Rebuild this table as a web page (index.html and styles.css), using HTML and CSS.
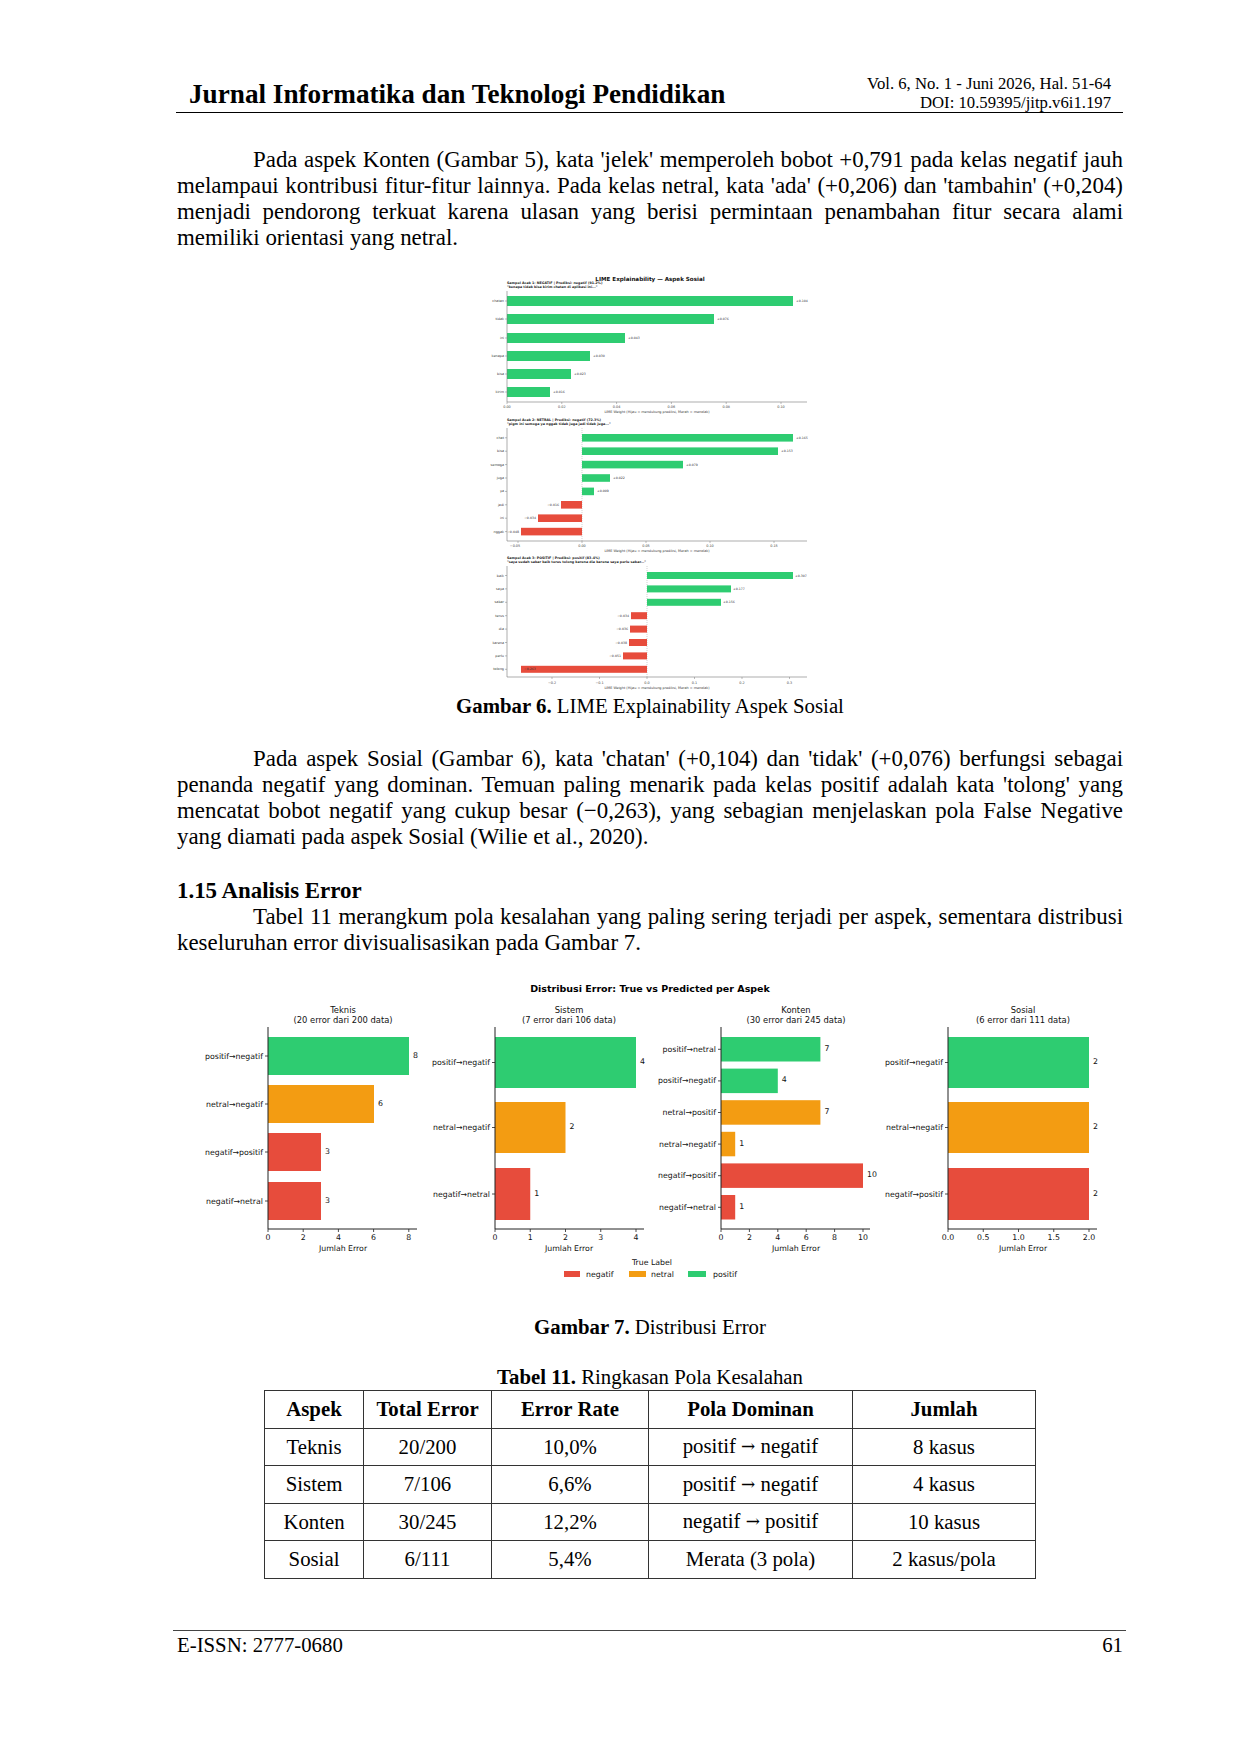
FILE: index.html
```html
<!DOCTYPE html>
<html lang="id">
<head>
<meta charset="utf-8">
<title>Jurnal Informatika dan Teknologi Pendidikan - Hal. 61</title>
<link rel="stylesheet" href="styles.css">
</head>
<body>
<div class="page">
  <header class="running-head">
    <div class="journal">Jurnal Informatika dan Teknologi Pendidikan</div>
    <div class="meta">
      <div>Vol. 6, No. 1 - Juni 2026, Hal. 51-64</div>
      <div>DOI: 10.59395/jitp.v6i1.197</div>
    </div>
  </header>

  <p class="para first">Pada aspek Konten (Gambar 5), kata 'jelek' memperoleh bobot +0,791 pada kelas negatif jauh melampaui kontribusi fitur-fitur lainnya. Pada kelas netral, kata 'ada' (+0,206) dan 'tambahin' (+0,204) menjadi pendorong terkuat karena ulasan yang berisi permintaan penambahan fitur secara alami memiliki orientasi yang netral.</p>

  <figure class="figure fig6">
    <svg class="chart" width="362" height="426" viewBox="0 0 362 426">
      <text class="l-title" x="181" y="10">LIME Explainability — Aspek Sosial</text>

      <!-- plot 1 -->
      <text class="l-head" x="38" y="14">Sampel Acak 1: NEGATIF | Prediksi: negatif (91.2%)</text>
      <text class="l-head" x="38" y="18">"kenapa tidak bisa kirim chatan di aplikasi ini..."</text>
      <rect class="bg" x="38" y="27" width="286" height="10"/>
      <rect class="bg" x="38" y="45" width="207" height="10"/>
      <rect class="bg" x="38" y="64" width="118" height="10"/>
      <rect class="bg" x="38" y="82" width="83" height="10"/>
      <rect class="bg" x="38" y="100" width="64" height="10"/>
      <rect class="bg" x="38" y="118" width="43" height="10"/>
      <g class="l-lab">
        <text x="35" y="32">chatan</text>
        <text x="35" y="50">tidak</text>
        <text x="35" y="69">ini</text>
        <text x="35" y="87">kenapa</text>
        <text x="35" y="105">bisa</text>
        <text x="35" y="123">kirim</text>
      </g>
      <g class="l-val">
        <text x="327" y="32">+0.104</text>
        <text x="248" y="50">+0.076</text>
        <text x="159" y="69">+0.043</text>
        <text x="124" y="87">+0.030</text>
        <text x="105" y="105">+0.023</text>
        <text x="84" y="123">+0.016</text>
      </g>
      <g class="l-tk">
        <line x1="36" y1="32" x2="38" y2="32"/><line x1="36" y1="50" x2="38" y2="50"/>
        <line x1="36" y1="69" x2="38" y2="69"/><line x1="36" y1="87" x2="38" y2="87"/>
        <line x1="36" y1="105" x2="38" y2="105"/><line x1="36" y1="123" x2="38" y2="123"/>
        <line x1="38" y1="133" x2="38" y2="135"/><line x1="92.8" y1="133" x2="92.8" y2="135"/>
        <line x1="147.6" y1="133" x2="147.6" y2="135"/><line x1="202.4" y1="133" x2="202.4" y2="135"/>
        <line x1="257.2" y1="133" x2="257.2" y2="135"/><line x1="312" y1="133" x2="312" y2="135"/>
      </g>
      <line class="l-spine" x1="38" y1="22" x2="38" y2="133"/>
      <line class="l-spine" x1="38" y1="133" x2="338" y2="133"/>
      <g class="l-tick">
        <text x="38" y="138">0.00</text><text x="92.8" y="138">0.02</text>
        <text x="147.6" y="138">0.04</text><text x="202.4" y="138">0.06</text>
        <text x="257.2" y="138">0.08</text><text x="312" y="138">0.10</text>
      </g>
      <text class="l-xl" x="188" y="143">LIME Weight (Hijau = mendukung prediksi, Merah = menolak)</text>

      <!-- plot 2 -->
      <text class="l-head" x="38" y="151">Sampel Acak 2: NETRAL | Prediksi: negatif (72.3%)</text>
      <text class="l-head" x="38" y="155">"pigm ini semoga ya nggak tidak juga jadi tidak juga..."</text>
      <line class="l-zero" x1="113" y1="159" x2="113" y2="272"/>
      <rect class="bg" x="113" y="165" width="211" height="7.6"/>
      <rect class="bg" x="113" y="178.4" width="196" height="7.6"/>
      <rect class="bg" x="113" y="191.8" width="101" height="7.6"/>
      <rect class="bg" x="113" y="205.2" width="28" height="7.6"/>
      <rect class="bg" x="113" y="218.6" width="12" height="7.6"/>
      <rect class="br" x="92" y="232" width="21" height="7.6"/>
      <rect class="br" x="69" y="245.4" width="44" height="7.6"/>
      <rect class="br" x="52" y="258.8" width="61" height="7.6"/>
      <g class="l-lab">
        <text x="35" y="168.8">chat</text>
        <text x="35" y="182.2">bisa</text>
        <text x="35" y="195.6">semoga</text>
        <text x="35" y="209">juga</text>
        <text x="35" y="222.4">ya</text>
        <text x="35" y="235.8">jadi</text>
        <text x="35" y="249.2">ini</text>
        <text x="35" y="262.6">nggak</text>
      </g>
      <g class="l-val">
        <text x="327" y="168.8">+0.165</text>
        <text x="312" y="182.2">+0.153</text>
        <text x="217" y="195.6">+0.079</text>
        <text x="144" y="209">+0.022</text>
        <text x="128" y="222.4">+0.009</text>
      </g>
      <g class="l-valr">
        <text x="90" y="235.8">−0.016</text>
        <text x="67" y="249.2">−0.034</text>
        <text x="50" y="262.6">−0.048</text>
      </g>
      <g class="l-tk">
        <line x1="36" y1="168.8" x2="38" y2="168.8"/><line x1="36" y1="182.2" x2="38" y2="182.2"/>
        <line x1="36" y1="195.6" x2="38" y2="195.6"/><line x1="36" y1="209" x2="38" y2="209"/>
        <line x1="36" y1="222.4" x2="38" y2="222.4"/><line x1="36" y1="235.8" x2="38" y2="235.8"/>
        <line x1="36" y1="249.2" x2="38" y2="249.2"/><line x1="36" y1="262.6" x2="38" y2="262.6"/>
        <line x1="49" y1="272" x2="49" y2="274"/><line x1="113" y1="272" x2="113" y2="274"/>
        <line x1="177" y1="272" x2="177" y2="274"/><line x1="241" y1="272" x2="241" y2="274"/>
        <line x1="305" y1="272" x2="305" y2="274"/>
      </g>
      <line class="l-spine" x1="38" y1="159" x2="38" y2="272"/>
      <line class="l-spine" x1="38" y1="272" x2="338" y2="272"/>
      <g class="l-tick">
        <text x="46" y="277">−0.05</text><text x="113" y="277">0.00</text>
        <text x="177" y="277">0.05</text><text x="241" y="277">0.10</text>
        <text x="305" y="277">0.15</text>
      </g>
      <text class="l-xl" x="188" y="282">LIME Weight (Hijau = mendukung prediksi, Merah = menolak)</text>

      <!-- plot 3 -->
      <text class="l-head" x="38" y="289">Sampel Acak 3: POSITIF | Prediksi: positif (83.4%)</text>
      <text class="l-head" x="38" y="293">"saya sudah sabar baik terus tolong karena dia karena saya perlu sabar..."</text>
      <line class="l-zero" x1="178" y1="297" x2="178" y2="408"/>
      <rect class="bg" x="178" y="303" width="146" height="7"/>
      <rect class="bg" x="178" y="316.4" width="84" height="7"/>
      <rect class="bg" x="178" y="329.8" width="74" height="7"/>
      <rect class="br" x="162" y="343.2" width="16" height="7"/>
      <rect class="br" x="161" y="356.6" width="17" height="7"/>
      <rect class="br" x="160" y="370" width="18" height="7"/>
      <rect class="br" x="154" y="383.4" width="24" height="7"/>
      <rect class="br" x="52" y="396.8" width="126" height="7"/>
      <g class="l-lab">
        <text x="35" y="306.5">baik</text>
        <text x="35" y="319.9">saya</text>
        <text x="35" y="333.3">sabar</text>
        <text x="35" y="346.7">terus</text>
        <text x="35" y="360.1">dia</text>
        <text x="35" y="373.5">karena</text>
        <text x="35" y="386.9">perlu</text>
        <text x="35" y="400.3">tolong</text>
      </g>
      <g class="l-val">
        <text x="326" y="306.5">+0.307</text>
        <text x="264" y="319.9">+0.177</text>
        <text x="254" y="333.3">+0.156</text>
      </g>
      <g class="l-valr">
        <text x="160" y="346.7">−0.034</text>
        <text x="159" y="360.1">−0.036</text>
        <text x="158" y="373.5">−0.038</text>
        <text x="152" y="386.9">−0.051</text>
        <text x="55" y="400.3" class="inside">−0.263</text>
      </g>
      <g class="l-tk">
        <line x1="36" y1="306.5" x2="38" y2="306.5"/><line x1="36" y1="319.9" x2="38" y2="319.9"/>
        <line x1="36" y1="333.3" x2="38" y2="333.3"/><line x1="36" y1="346.7" x2="38" y2="346.7"/>
        <line x1="36" y1="360.1" x2="38" y2="360.1"/><line x1="36" y1="373.5" x2="38" y2="373.5"/>
        <line x1="36" y1="386.9" x2="38" y2="386.9"/><line x1="36" y1="400.3" x2="38" y2="400.3"/>
        <line x1="83" y1="408" x2="83" y2="410"/><line x1="130.5" y1="408" x2="130.5" y2="410"/>
        <line x1="178" y1="408" x2="178" y2="410"/><line x1="225.5" y1="408" x2="225.5" y2="410"/>
        <line x1="273" y1="408" x2="273" y2="410"/><line x1="320.5" y1="408" x2="320.5" y2="410"/>
      </g>
      <line class="l-spine" x1="38" y1="297" x2="38" y2="408"/>
      <line class="l-spine" x1="38" y1="408" x2="338" y2="408"/>
      <g class="l-tick">
        <text x="83" y="414">−0.2</text><text x="130.5" y="414">−0.1</text>
        <text x="178" y="414">0.0</text><text x="225.5" y="414">0.1</text>
        <text x="273" y="414">0.2</text><text x="320.5" y="414">0.3</text>
      </g>
      <text class="l-xl" x="188" y="419">LIME Weight (Hijau = mendukung prediksi, Merah = menolak)</text>
    </svg>
    <figcaption class="caption"><b>Gambar 6.</b> LIME Explainability Aspek Sosial</figcaption>
  </figure>

  <p class="para after-fig">Pada aspek Sosial (Gambar 6), kata 'chatan' (+0,104) dan 'tidak' (+0,076) berfungsi sebagai penanda negatif yang dominan. Temuan paling menarik pada kelas positif adalah kata 'tolong' yang mencatat bobot negatif yang cukup besar (−0,263), yang sebagian menjelaskan pola False Negative yang diamati pada aspek Sosial (Wilie et al., 2020).</p>

  <h2 class="section">1.15 Analisis Error</h2>
  <p class="para">Tabel 11 merangkum pola kesalahan yang paling sering terjadi per aspek, sementara distribusi keseluruhan error divisualisasikan pada Gambar 7.</p>

  <figure class="figure fig7">
    <svg class="chart" width="951" height="310" viewBox="0 0 951 310">
      <text class="e-title" x="473" y="14">Distribusi Error: True vs Predicted per Aspek</text>

      <!-- Teknis -->
      <text class="e-sub" x="166" y="36">Teknis</text>
      <text class="e-sub" x="166" y="46">(20 error dari 200 data)</text>
      <rect class="eg" x="91" y="63" width="141" height="38"/>
      <rect class="eo" x="91" y="111" width="106" height="38"/>
      <rect class="er" x="91" y="159" width="53" height="38"/>
      <rect class="er" x="91" y="208" width="53" height="38"/>
      <g class="e-lab">
        <text x="86" y="82">positif→negatif</text>
        <text x="86" y="130">netral→negatif</text>
        <text x="86" y="178">negatif→positif</text>
        <text x="86" y="227">negatif→netral</text>
      </g>
      <g class="e-val">
        <text x="236" y="81">8</text><text x="201" y="129">6</text>
        <text x="148" y="177">3</text><text x="148" y="226">3</text>
      </g>
      <g class="e-tk">
        <line x1="88" y1="82" x2="91" y2="82"/><line x1="88" y1="130" x2="91" y2="130"/>
        <line x1="88" y1="178" x2="91" y2="178"/><line x1="88" y1="227" x2="91" y2="227"/>
        <line x1="91" y1="255" x2="91" y2="258"/><line x1="126.2" y1="255" x2="126.2" y2="258"/>
        <line x1="161.4" y1="255" x2="161.4" y2="258"/><line x1="196.6" y1="255" x2="196.6" y2="258"/>
        <line x1="231.8" y1="255" x2="231.8" y2="258"/>
      </g>
      <line class="e-spine" x1="91" y1="53" x2="91" y2="255"/>
      <line class="e-spine" x1="91" y1="255" x2="240" y2="255"/>
      <g class="e-tick">
        <text x="91" y="263">0</text><text x="126.2" y="263">2</text><text x="161.4" y="263">4</text>
        <text x="196.6" y="263">6</text><text x="231.8" y="263">8</text>
      </g>
      <text class="e-xl" x="166" y="274">Jumlah Error</text>

      <!-- Sistem -->
      <text class="e-sub" x="392" y="36">Sistem</text>
      <text class="e-sub" x="392" y="46">(7 error dari 106 data)</text>
      <rect class="eg" x="318" y="63" width="141" height="51"/>
      <rect class="eo" x="318" y="128" width="70.5" height="51"/>
      <rect class="er" x="318" y="194" width="35.25" height="52"/>
      <g class="e-lab">
        <text x="313" y="88.5">positif→negatif</text>
        <text x="313" y="153.5">netral→negatif</text>
        <text x="313" y="220">negatif→netral</text>
      </g>
      <g class="e-val">
        <text x="463" y="87.5">4</text><text x="392.5" y="152.5">2</text><text x="357.3" y="219">1</text>
      </g>
      <g class="e-tk">
        <line x1="315" y1="88.5" x2="318" y2="88.5"/><line x1="315" y1="153.5" x2="318" y2="153.5"/>
        <line x1="315" y1="220" x2="318" y2="220"/>
        <line x1="318" y1="255" x2="318" y2="258"/><line x1="353.25" y1="255" x2="353.25" y2="258"/>
        <line x1="388.5" y1="255" x2="388.5" y2="258"/><line x1="423.75" y1="255" x2="423.75" y2="258"/>
        <line x1="459" y1="255" x2="459" y2="258"/>
      </g>
      <line class="e-spine" x1="318" y1="53" x2="318" y2="255"/>
      <line class="e-spine" x1="318" y1="255" x2="467" y2="255"/>
      <g class="e-tick">
        <text x="318" y="263">0</text><text x="353.25" y="263">1</text><text x="388.5" y="263">2</text>
        <text x="423.75" y="263">3</text><text x="459" y="263">4</text>
      </g>
      <text class="e-xl" x="392" y="274">Jumlah Error</text>

      <!-- Konten -->
      <text class="e-sub" x="619" y="36">Konten</text>
      <text class="e-sub" x="619" y="46">(30 error dari 245 data)</text>
      <rect class="eg" x="544" y="63" width="99.4" height="24.5"/>
      <rect class="eg" x="544" y="94.6" width="56.8" height="24.5"/>
      <rect class="eo" x="544" y="126.2" width="99.4" height="24.5"/>
      <rect class="eo" x="544" y="157.8" width="14.2" height="24.5"/>
      <rect class="er" x="544" y="189.4" width="142" height="24.5"/>
      <rect class="er" x="544" y="221" width="14.2" height="24.5"/>
      <g class="e-lab">
        <text x="539" y="75.3">positif→netral</text>
        <text x="539" y="106.9">positif→negatif</text>
        <text x="539" y="138.5">netral→positif</text>
        <text x="539" y="170.1">netral→negatif</text>
        <text x="539" y="201.7">negatif→positif</text>
        <text x="539" y="233.3">negatif→netral</text>
      </g>
      <g class="e-val">
        <text x="647.4" y="74.3">7</text><text x="604.8" y="105.9">4</text>
        <text x="647.4" y="137.5">7</text><text x="562.2" y="169.1">1</text>
        <text x="690" y="200.7">10</text><text x="562.2" y="232.3">1</text>
      </g>
      <g class="e-tk">
        <line x1="541" y1="75.3" x2="544" y2="75.3"/><line x1="541" y1="106.9" x2="544" y2="106.9"/>
        <line x1="541" y1="138.5" x2="544" y2="138.5"/><line x1="541" y1="170.1" x2="544" y2="170.1"/>
        <line x1="541" y1="201.7" x2="544" y2="201.7"/><line x1="541" y1="233.3" x2="544" y2="233.3"/>
        <line x1="544" y1="255" x2="544" y2="258"/><line x1="572.4" y1="255" x2="572.4" y2="258"/>
        <line x1="600.8" y1="255" x2="600.8" y2="258"/><line x1="629.2" y1="255" x2="629.2" y2="258"/>
        <line x1="657.6" y1="255" x2="657.6" y2="258"/><line x1="686" y1="255" x2="686" y2="258"/>
      </g>
      <line class="e-spine" x1="544" y1="53" x2="544" y2="255"/>
      <line class="e-spine" x1="544" y1="255" x2="693" y2="255"/>
      <g class="e-tick">
        <text x="544" y="263">0</text><text x="572.4" y="263">2</text><text x="600.8" y="263">4</text>
        <text x="629.2" y="263">6</text><text x="657.6" y="263">8</text><text x="686" y="263">10</text>
      </g>
      <text class="e-xl" x="619" y="274">Jumlah Error</text>

      <!-- Sosial -->
      <text class="e-sub" x="846" y="36">Sosial</text>
      <text class="e-sub" x="846" y="46">(6 error dari 111 data)</text>
      <rect class="eg" x="771" y="63" width="141" height="51"/>
      <rect class="eo" x="771" y="128" width="141" height="51"/>
      <rect class="er" x="771" y="194" width="141" height="52"/>
      <g class="e-lab">
        <text x="766" y="88.5">positif→negatif</text>
        <text x="766" y="153.5">netral→negatif</text>
        <text x="766" y="220">negatif→positif</text>
      </g>
      <g class="e-val">
        <text x="916" y="87.5">2</text><text x="916" y="152.5">2</text><text x="916" y="219">2</text>
      </g>
      <g class="e-tk">
        <line x1="768" y1="88.5" x2="771" y2="88.5"/><line x1="768" y1="153.5" x2="771" y2="153.5"/>
        <line x1="768" y1="220" x2="771" y2="220"/>
        <line x1="771" y1="255" x2="771" y2="258"/><line x1="806.25" y1="255" x2="806.25" y2="258"/>
        <line x1="841.5" y1="255" x2="841.5" y2="258"/><line x1="876.75" y1="255" x2="876.75" y2="258"/>
        <line x1="912" y1="255" x2="912" y2="258"/>
      </g>
      <line class="e-spine" x1="771" y1="53" x2="771" y2="255"/>
      <line class="e-spine" x1="771" y1="255" x2="920" y2="255"/>
      <g class="e-tick">
        <text x="771" y="263">0.0</text><text x="806.25" y="263">0.5</text><text x="841.5" y="263">1.0</text>
        <text x="876.75" y="263">1.5</text><text x="912" y="263">2.0</text>
      </g>
      <text class="e-xl" x="846" y="274">Jumlah Error</text>

      <!-- legend -->
      <text class="e-xl" x="475" y="288">True Label</text>
      <rect class="er" x="387" y="297" width="16" height="6"/>
      <text class="e-leg" x="409" y="300">negatif</text>
      <rect class="eo" x="452" y="297" width="17" height="6"/>
      <text class="e-leg" x="474" y="300">netral</text>
      <rect class="eg" x="511" y="297" width="18" height="6"/>
      <text class="e-leg" x="536" y="300">positif</text>
    </svg>
    <figcaption class="caption"><b>Gambar 7.</b> Distribusi Error</figcaption>
  </figure>

  <div class="table-caption"><b>Tabel 11.</b> Ringkasan Pola Kesalahan</div>
  <table class="summary">
    <colgroup>
      <col class="c1"><col class="c2"><col class="c3"><col class="c4"><col class="c5">
    </colgroup>
    <thead>
      <tr><th>Aspek</th><th>Total Error</th><th>Error Rate</th><th>Pola Dominan</th><th>Jumlah</th></tr>
    </thead>
    <tbody>
      <tr><td>Teknis</td><td>20/200</td><td>10,0%</td><td>positif <span class="arrow">→</span> negatif</td><td>8 kasus</td></tr>
      <tr><td>Sistem</td><td>7/106</td><td>6,6%</td><td>positif <span class="arrow">→</span> negatif</td><td>4 kasus</td></tr>
      <tr><td>Konten</td><td>30/245</td><td>12,2%</td><td>negatif <span class="arrow">→</span> positif</td><td>10 kasus</td></tr>
      <tr><td>Sosial</td><td>6/111</td><td>5,4%</td><td>Merata (3 pola)</td><td>2 kasus/pola</td></tr>
    </tbody>
  </table>

  <footer class="page-foot">
    <span>E-ISSN: 2777-0680</span>
    <span>61</span>
  </footer>
</div>
</body>
</html>
```

FILE: styles.css
```css
html, body {
  margin: 0;
  padding: 0;
  background: #ffffff;
}

body {
  font-family: "Liberation Serif", "Times New Roman", serif;
  color: #000000;
}

.page {
  width: 946px;
  padding: 74px 117px 0 177px;
}

/* running head */
.running-head {
  display: flex;
  justify-content: space-between;
  align-items: flex-end;
  border-bottom: 1.5px solid #000;
  padding: 0 12px 0 13px;
  margin-left: -1px;
}

.journal {
  font-weight: bold;
  font-size: 27.2px;
  line-height: 30px;
  margin-bottom: 3px;
}

.meta {
  font-size: 16.7px;
  line-height: 19px;
  text-align: right;
}

/* body text */
.para {
  margin: 0;
  font-size: 22.9px;
  line-height: 26px;
  text-align: justify;
  text-indent: 76px;
}

.para.first {
  margin-top: 34px;
}

.para.after-fig {
  margin-top: 29px;
}

.section {
  margin: 28px 0 0;
  font-size: 22.9px;
  line-height: 26px;
  font-weight: bold;
}

/* figures */
.figure {
  margin: 0;
}

.fig6 {
  margin-top: 18px;
}

.fig7 {
  margin-top: 18px;
}

.chart {
  display: block;
  margin: 0 auto;
  font-family: "DejaVu Sans", Verdana, sans-serif;
}

.caption {
  font-size: 20.8px;
  line-height: 22px;
  text-align: center;
}

.fig7 .caption {
  margin-top: 32px;
}

/* LIME chart */
.bg { fill: #2ecc71; }
.br { fill: #e74c3c; }

.l-title {
  font-size: 5.6px;
  font-weight: bold;
  text-anchor: middle;
  dominant-baseline: central;
  fill: #111;
}

.l-head {
  font-size: 3.3px;
  font-weight: bold;
  dominant-baseline: central;
  fill: #222;
}

.l-lab text {
  font-size: 3.4px;
  text-anchor: end;
  dominant-baseline: central;
  fill: #333;
}

.l-val text,
.l-valr text {
  font-size: 3.2px;
  dominant-baseline: central;
  fill: #333;
}

.l-valr text {
  text-anchor: end;
}

.l-valr text.inside {
  text-anchor: start;
  fill: #333;
}

.l-tick text {
  font-size: 3.4px;
  text-anchor: middle;
  dominant-baseline: central;
  fill: #444;
}

.l-xl {
  font-size: 3.4px;
  text-anchor: middle;
  dominant-baseline: central;
  fill: #333;
}

.l-tk line {
  stroke: #555;
  stroke-width: 0.4;
}

.l-spine {
  stroke: #777;
  stroke-width: 0.6;
}

.l-zero {
  stroke: #888;
  stroke-width: 0.4;
  stroke-dasharray: 1 1;
}

/* error chart */
.eg { fill: #2ecc71; }
.eo { fill: #f39c12; }
.er { fill: #e74c3c; }

.e-title {
  font-size: 9.5px;
  font-weight: bold;
  text-anchor: middle;
  dominant-baseline: central;
  fill: #000;
}

.e-sub {
  font-size: 8.4px;
  text-anchor: middle;
  dominant-baseline: central;
  fill: #111;
}

.e-lab text {
  font-size: 7.8px;
  text-anchor: end;
  dominant-baseline: central;
  fill: #111;
}

.e-val text {
  font-size: 7.8px;
  dominant-baseline: central;
  fill: #111;
}

.e-tick text {
  font-size: 7.8px;
  text-anchor: middle;
  dominant-baseline: central;
  fill: #111;
}

.e-xl {
  font-size: 7.8px;
  text-anchor: middle;
  dominant-baseline: central;
  fill: #111;
}

.e-leg {
  font-size: 7.8px;
  dominant-baseline: central;
  fill: #111;
}

.e-tk line {
  stroke: #222;
  stroke-width: 0.8;
}

.e-spine {
  stroke: #222;
  stroke-width: 1;
}

/* table */
.table-caption {
  margin-top: 28px;
  font-size: 20.8px;
  line-height: 22px;
  text-align: center;
}

.summary {
  margin: 2px auto 0;
  border-collapse: collapse;
  font-size: 20.8px;
  table-layout: fixed;
  width: 771px;
}

.summary .c1 { width: 99px; }
.summary .c2 { width: 128px; }
.summary .c3 { width: 157px; }
.summary .c4 { width: 204px; }
.summary .c5 { width: 183px; }

.summary th,
.summary td {
  border: 1.4px solid #333;
  height: 36.5px;
  padding: 0;
  text-align: center;
  vertical-align: middle;
  line-height: 24px;
}

.summary th {
  font-weight: bold;
}

.arrow {
  font-family: "DejaVu Serif", serif;
  font-size: 17px;
  position: relative;
  top: -1px;
}

/* footer */
.page-foot {
  margin: 51px -3px 0 -4px;
  display: flex;
  justify-content: space-between;
  border-top: 1.5px solid #444;
  padding: 3px 3px 0 4px;
  font-size: 20.8px;
  line-height: 22px;
}
```
